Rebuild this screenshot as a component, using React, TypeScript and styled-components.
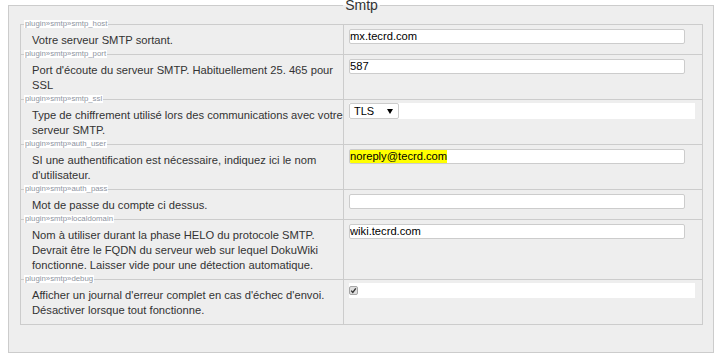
import React from 'react';
import styled, { createGlobalStyle } from 'styled-components';

const GlobalStyle = createGlobalStyle`
  html, body { margin: 0; padding: 0; background: #fff; }
  body { font-family: "Liberation Sans", Arial, sans-serif; color: #333; }
`;

const Panel = styled.fieldset`
  margin: 0 8px;
  padding: 14px 10px 27px 11px;
  border: 1px solid #ccc;
  background: #eee;
  min-width: 0;
`;

const Legend = styled.legend`
  margin: 0 auto;
  padding: 0 2px;
  font-size: 14px;
  line-height: 10px;
  color: #333;
`;

const Settings = styled.div`
  border: 1px solid #ccc;
  border-bottom: none;
`;

const Row = styled.div`
  display: grid;
  grid-template-columns: 323px 1fr;
  border-bottom: 1px solid #ccc;
`;

const LabelCell = styled.div`
  position: relative;
  border-right: 1px solid #ccc;
  padding: 8px 0 6px 11px;
  font-size: 11.2px;
  line-height: 15px;
`;

const Key = styled.span`
  position: absolute;
  top: -5px;
  left: 3px;
  padding: 0 1px;
  background: #fff;
  color: #8e94a0;
  font-size: 7.8px;
  line-height: 8px;
  white-space: nowrap;
`;

const Description = styled.div`
  margin-right: -4px;
`;

const InputCell = styled.div`
  padding: 4px 0 0 5px;
`;

const TextField = styled.div`
  box-sizing: border-box;
  width: 336px;
  height: 15px;
  border: 1px solid #ccc;
  border-radius: 2px;
  background: #fff;
  font-size: 11.2px;
  line-height: 13px;
  color: #000;
  white-space: nowrap;
  overflow: hidden;
`;

const Mark = styled.span<{ $on?: boolean }>`
  display: inline-block;
  height: 13px;
  background: ${(p) => (p.$on ? '#ff0' : 'transparent')};
`;

const Band = styled.div<{ $h: number }>`
  display: flex;
  align-items: center;
  width: 346px;
  height: ${(p) => p.$h}px;
  margin-top: -1px;
  background: #fff;
`;

const SelectBox = styled.div`
  box-sizing: border-box;
  display: flex;
  align-items: center;
  justify-content: space-between;
  width: 50px;
  height: 16px;
  padding: 0 5px 0 4px;
  border: 1px solid #ccc;
  border-radius: 2px;
  background: #fff;
  font-size: 11px;
  color: #000;
`;

const CheckBox = styled.span`
  box-sizing: border-box;
  display: inline-flex;
  align-items: center;
  justify-content: center;
  width: 9px;
  height: 9px;
  border: 1px solid #a6a6a6;
  border-radius: 2px;
  background: #dedede;
`;

type Setting = {
  key: string;
  label: string;
  kind: 'text' | 'select' | 'check';
  value?: string;
  mark?: boolean;
};

const settings: Setting[] = [
  { key: 'plugin»smtp»smtp_host', label: 'Votre serveur SMTP sortant.', kind: 'text', value: 'mx.tecrd.com' },
  { key: 'plugin»smtp»smtp_port', label: "Port d'écoute du serveur SMTP. Habituellement 25. 465 pour SSL", kind: 'text', value: '587' },
  { key: 'plugin»smtp»smtp_ssl', label: 'Type de chiffrement utilisé lors des communications avec votre serveur SMTP.', kind: 'select', value: 'TLS' },
  { key: 'plugin»smtp»auth_user', label: "SI une authentification est nécessaire, indiquez ici le nom d'utilisateur.", kind: 'text', value: 'noreply@tecrd.com', mark: true },
  { key: 'plugin»smtp»auth_pass', label: 'Mot de passe du compte ci dessus.', kind: 'text', value: '' },
  { key: 'plugin»smtp»localdomain', label: 'Nom à utiliser durant la phase HELO du protocole SMTP. Devrait être le FQDN du serveur web sur lequel DokuWiki fonctionne. Laisser vide pour une détection automatique.', kind: 'text', value: 'wiki.tecrd.com' },
  { key: 'plugin»smtp»debug', label: "Afficher un journal d'erreur complet en cas d'échec d'envoi. Désactiver lorsque tout fonctionne.", kind: 'check' },
];

function Control({ s }: { s: Setting }) {
  if (s.kind === 'select') {
    return (
      <Band $h={16}>
        <SelectBox>
          <span>{s.value}</span>
          <svg width="6" height="5" viewBox="0 0 6 5">
            <polygon points="0,0 6,0 3,5" fill="#000" />
          </svg>
        </SelectBox>
      </Band>
    );
  }
  if (s.kind === 'check') {
    return (
      <Band $h={15}>
        <CheckBox>
          <svg width="7" height="7" viewBox="0 0 7 7">
            <path d="M1.2 3.6 L2.8 5.4 L5.8 1.4" fill="none" stroke="#333" strokeWidth="1.4" />
          </svg>
        </CheckBox>
      </Band>
    );
  }
  return (
    <TextField>
      <Mark $on={s.mark}>{s.value}</Mark>
    </TextField>
  );
}

export default function App() {
  return (
    <>
      <GlobalStyle />
      <Panel>
        <Legend>Smtp</Legend>
        <Settings>
          {settings.map((s) => (
            <Row key={s.key}>
              <LabelCell>
                <Key>{s.key}</Key>
                <Description>{s.label}</Description>
              </LabelCell>
              <InputCell>
                <Control s={s} />
              </InputCell>
            </Row>
          ))}
        </Settings>
      </Panel>
    </>
  );
}
